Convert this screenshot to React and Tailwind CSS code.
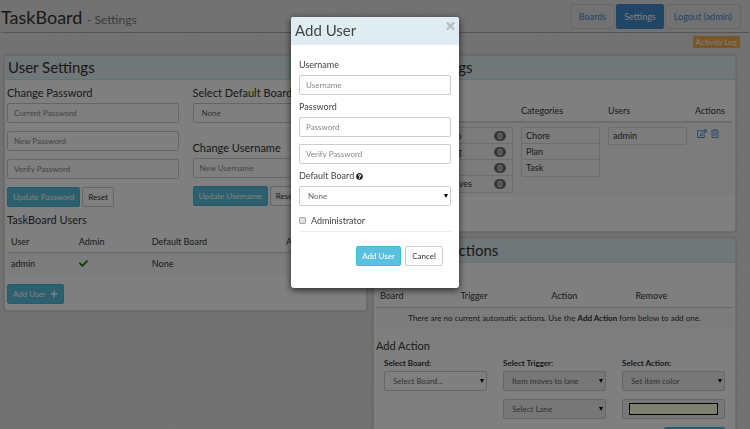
import { FaCheck, FaPlus, FaQuestionCircle, FaRegEdit, FaRegTrashAlt, FaTimes } from 'react-icons/fa';

const fieldBase = 'block h-5 w-full rounded-[2px] border border-[#ccc] px-1.5 text-[8px] placeholder-[#888]';

function Field({ label, type = 'text' }) {
  return <input className={`${fieldBase} bg-white text-[#555]`} type={type} placeholder={label} aria-label={label} />;
}

function Select({ id, label, value, disabled = false }) {
  return (
    <div className="relative">
      <select
        id={id}
        aria-label={label}
        disabled={disabled}
        className={`${fieldBase} appearance-none pl-2 text-[#666] opacity-100 ${disabled ? 'bg-[#eee]' : 'bg-white'}`}
      >
        <option>{value}</option>
      </select>
      <svg className="pointer-events-none absolute top-2 right-[3px] h-1 w-1" viewBox="0 0 4 4" aria-hidden="true">
        <path d="M0 0h4L2 4z" fill="#000" />
      </svg>
    </div>
  );
}

function Button({ primary = false, children, className = '' }) {
  return (
    <button
      type="button"
      className={`h-5 rounded-[2px] border px-[5px] text-[8px] whitespace-nowrap ${
        primary ? 'border-[#46b8da] bg-[#5bc0de] text-white' : 'border-[#ccc] bg-white text-[#333]'
      } ${className}`}
    >
      {children}
    </button>
  );
}

function Panel({ title, children }) {
  return (
    <section className="rounded-[3px] border border-[#ddd] bg-white shadow-[0_0_2px_rgba(0,0,0,0.3)]">
      <h2 className="h-6 rounded-t-[2px] border-b border-[#bce8f1] bg-[#dfeef3] px-[3px] text-[15px] leading-[22px] text-[#333]">
        {title}
      </h2>
      <div className="px-0.5">{children}</div>
    </section>
  );
}

function SubHeading({ children }) {
  return <h3 className="h-[17px] text-[11px] leading-[14px] text-[#333]">{children}</h3>;
}

function List({ items, counts = false }) {
  return (
    <ul className="divide-y divide-[#ddd] rounded-[2px] border border-[#ddd]">
      {items.map((item) => (
        <li key={item} className="flex h-4 items-center justify-between px-1 pr-1.5">
          <span>{item}</span>
          {counts && (
            <span className="rounded-full bg-[#777] px-1 text-[7px] leading-[10px] font-bold text-white">0</span>
          )}
        </li>
      ))}
    </ul>
  );
}

function UserSettings() {
  return (
    <Panel title="User Settings">
      <div className="grid grid-cols-2 gap-3.5 pt-1.5">
        <form>
          <SubHeading>Change Password</SubHeading>
          <div className="flex flex-col gap-2">
            <Field label="Current Password" type="password" />
            <Field label="New Password" type="password" />
            <Field label="Verify Password" type="password" />
            <div className="flex gap-0.5">
              <Button primary>Update Password</Button>
              <Button>Reset</Button>
            </div>
          </div>
        </form>
        <div>
          <SubHeading>Select Default Board</SubHeading>
          <Select label="Default board" value="None" />
          <form className="mt-[18px]">
            <SubHeading>Change Username</SubHeading>
            <div className="flex flex-col gap-2">
              <Field label="New Username" />
              <div className="flex gap-0.5">
                <Button primary>Update Username</Button>
                <Button>Reset</Button>
              </div>
            </div>
          </form>
        </div>
      </div>
      <h3 className="mt-1.5 text-[11px] leading-[14px] text-[#333]">TaskBoard Users</h3>
      <table className="mt-1 w-full text-left text-[9px] text-[#333]">
        <thead>
          <tr className="h-[21px] border-b border-[#ccc]">
            <th className="w-[19%] pl-1 font-normal">User</th>
            <th className="w-[21%] pl-1 font-normal">Admin</th>
            <th className="w-[37%] pl-0.5 font-normal">Default Board</th>
            <th className="pl-1 font-normal">Actions</th>
          </tr>
        </thead>
        <tbody>
          <tr className="h-[22px] bg-[#f9f9f9]">
            <td className="pl-1">admin</td>
            <td className="pl-1"><FaCheck className="h-[9px] w-[9px] text-[#008000]" aria-label="Yes" /></td>
            <td className="pl-0.5">None</td>
            <td />
          </tr>
        </tbody>
      </table>
      <Button primary className="mt-2.5 mb-1.5">
        <span className="flex items-center gap-1">Add User <FaPlus className="h-2 w-2" /></span>
      </Button>
    </Panel>
  );
}

function BoardSettings() {
  return (
    <Panel title="Board Settings">
      <table className="mt-5 mb-[34px] w-full table-fixed text-left text-[9px] text-[#333]">
        <thead>
          <tr className="h-[22px] border-b-2 border-[#ddd]">
            <th className="pl-1 font-normal">Board</th>
            <th className="w-[88px] px-1 font-normal">Lanes</th>
            <th className="w-[87px] px-1 font-normal">Categories</th>
            <th className="w-[87px] px-1 font-normal">Users</th>
            <th className="w-[42px] px-1 font-normal">Actions</th>
          </tr>
        </thead>
        <tbody>
          <tr className="bg-[#f9f9f9] align-top">
            <td className="p-1">Home</td>
            <td className="p-1"><List items={['To Do', 'Doing', 'Test', 'Archives']} counts /></td>
            <td className="p-1"><List items={['Chore', 'Plan', 'Task']} /></td>
            <td className="p-1"><List items={['admin']} /></td>
            <td className="px-1.5 py-1.5">
              <div className="flex items-center gap-1 text-[#428bca]">
                <button type="button" aria-label="Edit board"><FaRegEdit className="h-[9px] w-[10px]" /></button>
                <button type="button" aria-label="Delete board"><FaRegTrashAlt className="h-[9px] w-2" /></button>
              </div>
            </td>
          </tr>
        </tbody>
      </table>
    </Panel>
  );
}

function ActionLabel({ htmlFor, children }) {
  return (
    <label htmlFor={htmlFor} className="block h-3.5 text-[8px] leading-[12px] font-bold text-[#333]">
      {children}
    </label>
  );
}

function AutomaticActions() {
  return (
    <Panel title="Automatic Actions">
      <table className="mt-[22px] w-full text-left text-[9px] text-[#333]">
        <thead>
          <tr className="h-[22px] border-b border-[#ccc]">
            <th className="w-[22%] pl-1 font-normal">Board</th>
            <th className="w-[26%] pl-1.5 font-normal">Trigger</th>
            <th className="w-[23%] pl-1 font-normal">Action</th>
            <th className="pl-1.5 font-normal">Remove</th>
          </tr>
        </thead>
        <tbody>
          <tr className="h-[22px] bg-[#f9f9f9] text-center text-[8px]">
            <td colSpan={4}>
              There are no current automatic actions. Use the <b>Add Action</b> form below to add one.
            </td>
          </tr>
        </tbody>
      </table>
      <h3 className="mt-2.5 text-[11px] leading-[14px] text-[#333]">Add Action</h3>
      <form className="px-2 pt-1 pb-2">
        <div className="grid grid-cols-3 gap-x-4 gap-y-2">
          <div>
            <ActionLabel htmlFor="board">Select Board:</ActionLabel>
            <Select id="board" value="Select Board..." />
          </div>
          <div>
            <ActionLabel htmlFor="trigger">Select Trigger:</ActionLabel>
            <Select id="trigger" value="Item moves to lane" disabled />
          </div>
          <div>
            <ActionLabel htmlFor="action">Select Action:</ActionLabel>
            <Select id="action" value="Set item color" disabled />
          </div>
          <div className="col-start-2"><Select label="Lane" value="Select Lane" disabled /></div>
          <button type="button" aria-label="Item color" className="h-5 rounded-[2px] border border-[#ccc] bg-[#eee] px-1.5">
            <span className="block h-3 border border-black bg-[#ffffe0]" />
          </button>
        </div>
        <div className="mt-2 flex justify-end">
          <Button primary className="w-[61px]">Add Action</Button>
        </div>
      </form>
    </Panel>
  );
}

function AddUserDialog() {
  return (
    <div className="fixed inset-0 flex items-start justify-center bg-black/50 pt-[17px]">
      <div
        role="dialog"
        aria-modal="true"
        aria-labelledby="add-user-title"
        className="w-[168px] rounded-[3px] bg-white text-[9px] text-[#444] shadow-[0_2px_7px_rgba(0,0,0,0.7)]"
      >
        <header className="flex h-7 justify-between rounded-t-[3px] bg-[#dfecf2] px-1">
          <h2 id="add-user-title" className="text-[15px] leading-[26px]">Add User</h2>
          <button type="button" aria-label="Close" className="h-[18px]">
            <FaTimes className="h-3 w-[9px] text-[#b2bcc2]" />
          </button>
        </header>
        <form className="px-2 pt-3.5 pb-[22px]">
          <label htmlFor="username" className="block h-4 leading-[12px]">Username</label>
          <input id="username" placeholder="Username" className={`${fieldBase} bg-white text-[#555]`} />
          <label htmlFor="password" className="mt-1.5 block h-4 leading-[12px]">Password</label>
          <input id="password" type="password" placeholder="Password" className={`${fieldBase} mb-[7px] bg-white text-[#555]`} />
          <Field label="Verify Password" type="password" />
          <label htmlFor="default-board" className="mt-1.5 flex h-4 gap-0.5 leading-[12px]">
            Default Board <FaQuestionCircle className="mt-[3px] h-[7px] w-[7px] text-[#222]" />
          </label>
          <Select id="default-board" value="None" />
          <label className="flex h-[26px] items-center gap-[5px] border-b border-[#eee] pt-1">
            <input type="checkbox" className="h-[7px] w-[7px] appearance-none rounded-[1px] border border-[#aaa] bg-[#e0e0e0]" />
            Administrator
          </label>
          <div className="mt-3.5 flex justify-end gap-1 pr-2">
            <Button primary className="w-[45px]">Add User</Button>
            <Button className="w-[38px]">Cancel</Button>
          </div>
        </form>
      </div>
    </div>
  );
}

export default function App() {
  return (
    <div className="h-screen overflow-hidden bg-[#e4e4e4] bg-[repeating-linear-gradient(45deg,#e7e7e7_0px,#e7e7e7_1px,#dfdfdf_2px,#e7e7e7_3px)] font-[Lato,sans-serif]">
      <header className="mx-px flex h-[33px] items-start justify-between border-b border-[#aaa] pt-1 pr-2">
        <h1 className="text-[18px] leading-[26px] text-[#333]">
          TaskBoard <small className="text-[12px] text-[#777]">- Settings</small>
        </h1>
        <nav className="flex h-[25px] gap-px text-[9px] text-[#428bca]">
          <a href="#boards" className="flex items-center rounded-[3px] border border-[#ccc] px-2">Boards</a>
          <a href="#settings" className="flex items-center rounded-[2px] border border-[#428bca] bg-[#428bca] px-[7px] text-white">Settings</a>
          <a href="#logout" className="flex items-center rounded-[3px] border border-[#ccc] px-2">Logout (admin)</a>
        </nav>
      </header>
      <div className="flex h-[22px] items-start justify-end pt-[3px] pr-2.5">
        <button type="button" className="h-3 rounded-[2px] bg-[#f0ad4e] px-[3px] text-[8px] leading-[12px] text-white">Activity Log</button>
      </div>
      <main className="grid grid-cols-2 items-start gap-1.5 pr-3.5 pl-1">
        <UserSettings />
        <div className="flex flex-col gap-1.5">
          <BoardSettings />
          <AutomaticActions />
        </div>
      </main>
      <AddUserDialog />
    </div>
  );
}
